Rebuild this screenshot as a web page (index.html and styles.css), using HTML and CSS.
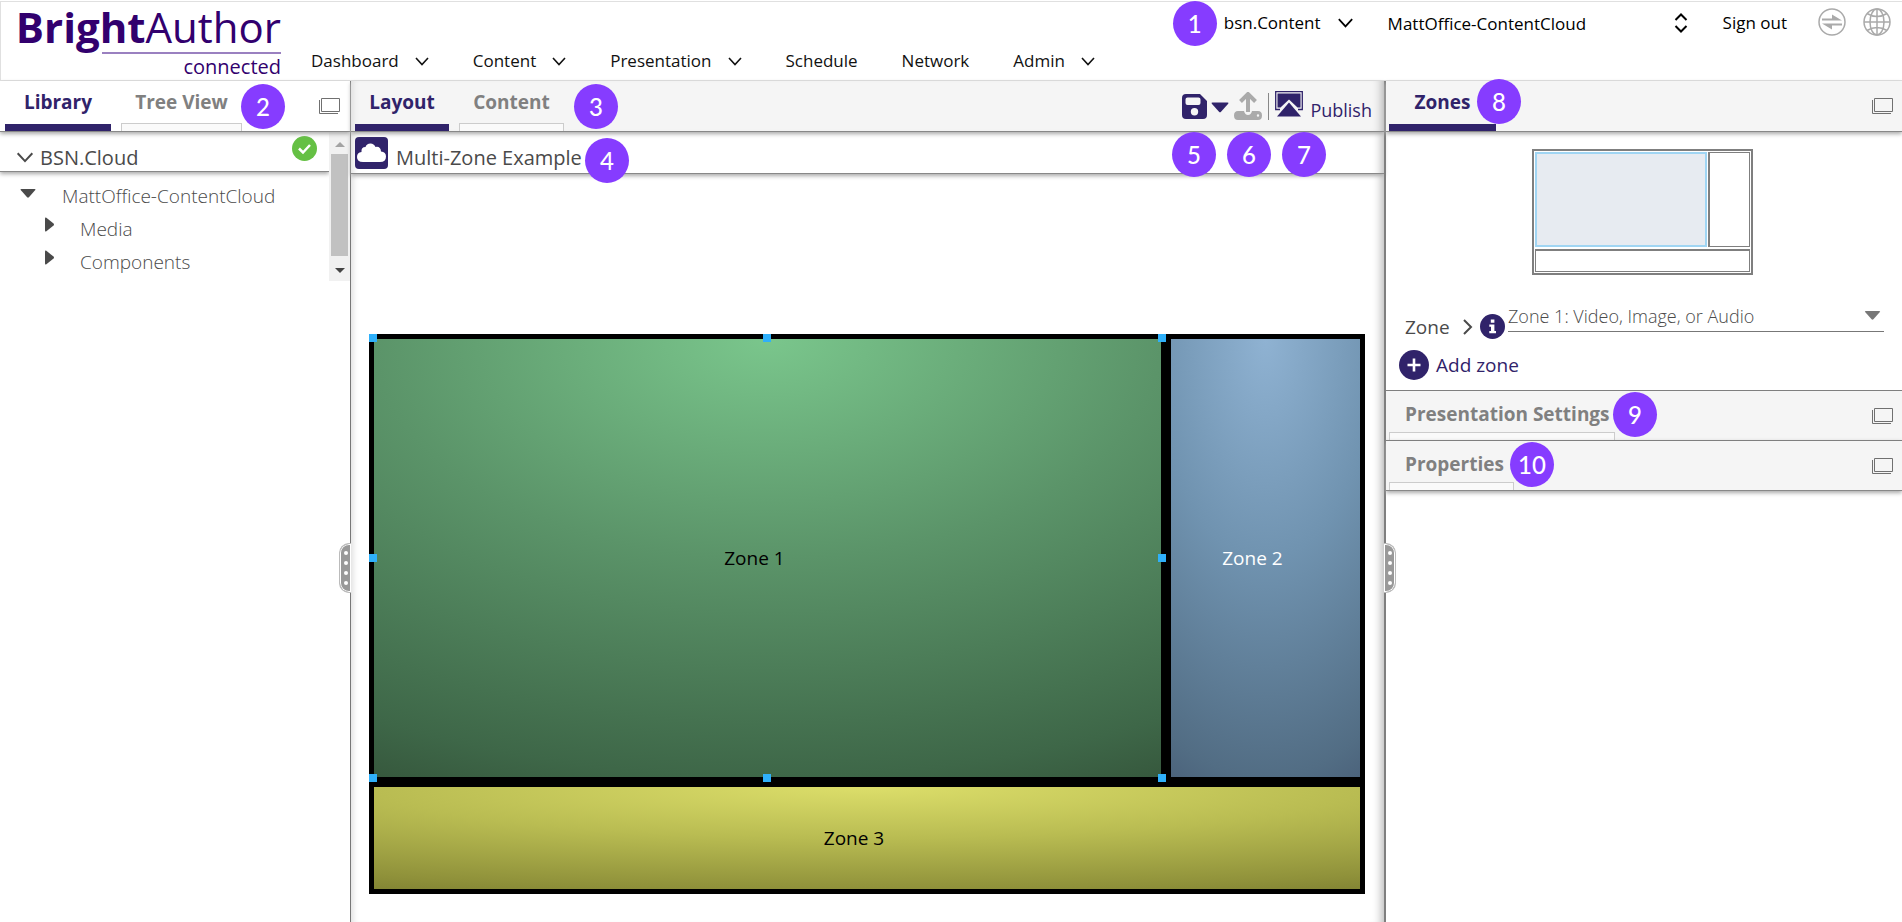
FILE: index.html
```html
<!DOCTYPE html>
<html lang="en">
<head>
<meta charset="utf-8">
<title>BrightAuthor:connected</title>
<link rel="stylesheet" href="styles.css">
</head>
<body>
<svg class="sprite" aria-hidden="true">
  <symbol id="chevron" viewBox="0 0 14 9"><path d="M1 1l6 6.500 6-6.500" fill="none" stroke="currentColor" stroke-width="1.600"/></symbol>
  <symbol id="windows" viewBox="0 0 23 18"><path d="M3.500 1.500h18v13h-18zM1.500 3v13.500H20" fill="none" stroke="currentColor"/></symbol>
  <symbol id="caret" viewBox="0 0 18 10"><path d="M1.500 0h15q1.500 0 .700 1.200L10 9.300q-1 1-2 0L.800 1.200Q0 0 1.500 0z" fill="currentColor"/></symbol>
</svg>

<header class="header">
  <a class="logo" href="#"><span class="logo-name"><b>Bright</b>Author</span><span class="logo-sub">connected</span></a>
  <nav class="nav">
    <button class="nav-item">Dashboard <svg class="chev"><use href="#chevron"/></svg></button>
    <button class="nav-item">Content <svg class="chev"><use href="#chevron"/></svg></button>
    <button class="nav-item">Presentation <svg class="chev"><use href="#chevron"/></svg></button>
    <a class="nav-item" href="#">Schedule</a>
    <a class="nav-item" href="#">Network</a>
    <button class="nav-item">Admin <svg class="chev"><use href="#chevron"/></svg></button>
  </nav>
  <div class="account">
    <span class="pin">1</span>
    <button class="nav-item service">bsn.Content <svg class="chev chev-lg"><use href="#chevron"/></svg></button>
    <div class="network-picker">
      <select class="network" aria-label="Network"><option>MattOffice-ContentCloud</option></select>
      <svg class="sorter" viewBox="0 0 14 20"><path d="M1.500 7L7 1.500 12.500 7M1.500 13L7 18.500 12.500 13" fill="none" stroke="currentColor" stroke-width="2"/></svg>
    </div>
    <a class="nav-item signout" href="#">Sign out</a>
    <button class="round" aria-label="Transfers"><svg viewBox="0 0 28 28"><circle cx="14" cy="14" r="13" fill="none" stroke="currentColor" stroke-width="1.500"/><path d="M4 12.500h20L14 6.500v4H4zM24 15.500H4l10 6v-4h10z" fill="currentColor"/></svg></button>
    <button class="round" aria-label="Language"><svg viewBox="0 0 28 28"><g fill="none" stroke="currentColor" stroke-width="1.500"><circle cx="14" cy="14" r="13"/><ellipse cx="14" cy="14" rx="7" ry="13"/><path d="M14 1v26M1 14h26M4 5.500q10 6 20 0M4 22.500q10-6 20 0"/></g></svg></button>
  </div>
</header>

<main class="workspace">
  <aside class="library">
    <div class="tabs tabs-plain">
      <button class="tab active">Library</button>
      <button class="tab tree-tab">Tree View</button>
      <button class="detach" aria-label="Detach panel"><svg><use href="#windows"/></svg></button>
      <span class="pin pin-2">2</span>
    </div>
    <div class="library-body">
      <div class="library-content">
        <div class="source">
          <svg class="source-chev"><use href="#chevron"/></svg><span class="source-name">BSN.Cloud</span>
          <svg class="check" viewBox="0 0 25 25"><circle cx="12.500" cy="12.500" r="12.500" fill="#65c044"/><path d="M7 12.500l4 4 7-7.500" fill="none" stroke="#fff" stroke-width="2.500"/></svg>
        </div>
        <ul class="tree">
          <li class="node"><svg class="open"><use href="#caret"/></svg>MattOffice-ContentCloud</li>
          <li class="node child"><svg class="closed" viewBox="0 0 10 16"><path d="M0 1.500Q0-.500 1.500.500L9.500 7q1 1 0 2L1.500 15.500Q0 16.500 0 14.500z" fill="currentColor"/></svg>Media</li>
          <li class="node child"><svg class="closed" viewBox="0 0 10 16"><path d="M0 1.500Q0-.500 1.500.500L9.500 7q1 1 0 2L1.500 15.500Q0 16.500 0 14.500z" fill="currentColor"/></svg>Components</li>
        </ul>
      </div>
      <div class="scrollbar"><i class="arrow up"></i><i class="thumb"></i><i class="arrow down"></i></div>
    </div>
    <span class="grip grip-left"><i></i><i></i><i></i><i></i></span>
  </aside>

  <section class="editor">
    <div class="tabs">
      <button class="tab active layout-tab">Layout</button>
      <button class="tab content-tab">Content</button>
      <div class="tools">
        <button class="tool" aria-label="Save"><svg class="save" viewBox="0 0 25 25"><path fill-rule="evenodd" d="M4 0h14l7 7v14q0 4-4 4H4q-4 0-4-4V4q0-4 4-4zM5.500 3.500Q3.500 3.500 3.500 5.500V9q0 2 2 2h11q2 0 2-2V5.500q0-2-2-2zM12.500 14a3.700 3.700 0 100 7.400 3.700 3.700 0 000-7.400z" fill="currentColor"/></svg></button>
        <button class="tool" aria-label="Save options"><svg class="save-caret"><use href="#caret"/></svg></button>
        <button class="tool" aria-label="Upload" disabled><svg class="upload" viewBox="0 0 28 28"><path d="M14 20V3M6.500 9.500L14 2l7.500 7.500" fill="none" stroke="currentColor" stroke-width="4"/><path fill-rule="evenodd" d="M4 19h6q1 4 4 4t4-4h6q4 0 4 4.500t-4 4.500H4q-4 0-4-4.500T4 19zm20 3.300a1.200 1.200 0 100 2.400 1.200 1.200 0 000-2.400z" fill="currentColor"/></svg></button>
        <span class="rule"></span>
        <button class="tool publish"><svg class="publish-icon" viewBox="0 0 28 26"><path d="M5 18.500H.700V.700h26.600v17.800H23" fill="none" stroke="currentColor" stroke-width="1.300"/><path d="M2.500 2.500h23v14h-3L14 8.500l-8.500 8h-3z" fill="currentColor"/><path d="M14 11.500L26 25.500H2z" fill="currentColor"/></svg>Publish</button>
      </div>
      <span class="pin pin-3">3</span>
      <span class="pin pin-5">5</span>
      <span class="pin pin-6">6</span>
      <span class="pin pin-7">7</span>
    </div>
    <div class="title-bar">
      <svg class="cloud" viewBox="0 0 33 32"><rect width="33" height="32" rx="4" fill="#30236a"/><path d="M8 25q-6 0-6-5 0-4.500 4.500-5Q6 10 10.500 10q1-3.500 5-3.500 3.500 0 5 3.500 5-1 5.500 4.500 5 .500 5 5 0 5.500-6 5.500z" fill="#fff"/></svg>
      <h1 class="title">Multi-Zone Example</h1>
      <span class="pin pin-4">4</span>
    </div>
    <div class="stage">
      <div class="screen">
        <div class="zone zone-1">Zone 1
          <i class="handle h-tl"></i><i class="handle h-t"></i><i class="handle h-tr"></i><i class="handle h-l"></i><i class="handle h-r"></i><i class="handle h-bl"></i><i class="handle h-b"></i><i class="handle h-br"></i>
        </div>
        <div class="zone zone-2">Zone 2</div>
        <div class="zone zone-3">Zone 3</div>
      </div>
    </div>
  </section>

  <aside class="inspector">
    <div class="tabs">
      <button class="tab active zones-tab">Zones</button>
      <button class="detach" aria-label="Detach panel"><svg><use href="#windows"/></svg></button>
      <span class="pin pin-8">8</span>
    </div>
    <div class="zones-body">
      <div class="mini"><i class="mini-1"></i><i class="mini-2"></i><i class="mini-3"></i></div>
      <div class="zone-row">
        <label class="zone-label" for="zone">Zone</label>
        <svg class="more" viewBox="0 0 10 16"><path d="M1 1l7 7-7 7" fill="none" stroke="currentColor" stroke-width="2"/></svg>
        <svg class="info" viewBox="0 0 25 25"><circle cx="12.500" cy="12.500" r="12.500" fill="#30236a"/><path d="M10.800 5.500h3.600v3.200h-3.600zM9.300 10.500h5.100v6.500H16v2.200H9.300V17h1.700v-4.300H9.300z" fill="#fff"/></svg>
        <div class="zone-picker">
          <select class="zone-select" id="zone"><option>Zone 1: Video, Image, or Audio</option></select>
          <svg class="zone-caret"><use href="#caret"/></svg>
        </div>
      </div>
      <button class="add"><svg class="plus" viewBox="0 0 30 30"><circle cx="15" cy="15" r="15" fill="#30236a"/><path d="M15 8.500v13M8.500 15h13" stroke="#fff" stroke-width="2.600"/></svg>Add zone</button>
    </div>
    <div class="fold">
      <button class="fold-title settings">Presentation Settings</button>
      <button class="detach" aria-label="Detach panel"><svg><use href="#windows"/></svg></button>
      <span class="pin pin-9">9</span>
    </div>
    <div class="fold last">
      <button class="fold-title props">Properties</button>
      <button class="detach" aria-label="Detach panel"><svg><use href="#windows"/></svg></button>
      <span class="pin pin-10">10</span>
    </div>
    <span class="grip grip-right"><i></i><i></i><i></i><i></i></span>
  </aside>
</main>
</body>
</html>
```

FILE: styles.css
```css
* { box-sizing: border-box; }

body {
  margin: 0;
  min-height: 100vh;
  display: flex;
  flex-direction: column;
  background: #fff;
  color: #4a4a4a;
  font-family: "Open Sans", "Noto Sans", sans-serif;
  font-size: 18px;
  overflow-x: hidden;
}

button, select {
  font: inherit;
  color: inherit;
  background: none;
  border: 0;
  padding: 0;
  margin: 0;
  cursor: pointer;
}
select { appearance: none; }
a { color: inherit; text-decoration: none; }
svg { display: block; flex: none; }
.sprite { position: absolute; width: 0; height: 0; }

/* Header */
.header {
  display: flex;
  height: 80px;
  margin-top: 1px;
  border: 1px solid #e0e0e0;
  border-right: 0;
  padding-left: 15px;
  color: #111;
  font-size: 17px;
  position: relative;
}
.logo {
  display: flex;
  flex-direction: column;
  align-items: flex-end;
  width: 265px;
  color: #32006e;
}
.logo-name {
  font-size: 42px;
  line-height: 50px;
  white-space: nowrap;
}
.logo-sub {
  border-top: 2px solid #9a80c0;
  width: 179px;
  text-align: right;
  font-size: 20px;
  line-height: 26px;
}
.nav {
  display: flex;
  align-items: flex-end;
  gap: 44px;
  padding: 0 0 7px 30px;
}
.nav-item {
  display: flex;
  align-items: center;
  gap: 16px;
  line-height: 24px;
  white-space: nowrap;
}
.chev { width: 14px; height: 9px; }
.chev-lg { width: 17px; height: 10px; }
.account {
  display: flex;
  align-items: flex-start;
  padding: 9px 11px 0 0;
  color: #000;
  position: absolute;
  right: 0;
  top: 0;
}
.account .pin { left: -51px; top: -1px; }
.service { margin-right: 34px; }
.network-picker {
  display: flex;
  align-items: center;
  width: 300px;
  margin-right: 35px;
}
.network { flex: 1; height: 24px; color: #000; }
.sorter { width: 14px; height: 20px; }
.signout { margin-right: 31px; }
.round { width: 28px; height: 28px; color: #aaa; margin-top: -3px; }
.round + .round { margin-left: 17px; }

/* Numbered callouts */
.pin {
  position: absolute;
  z-index: 5;
  width: 44px;
  height: 45px;
  border-radius: 50%;
  background: #863cff;
  color: #fff;
  font: 500 24px/45px Lato, sans-serif;
  text-align: center;
}
.pin-2 { left: 241px; top: 3px; }
.pin-3 { left: 223px; top: 3px; }
.pin-4 { left: 234px; top: 6px; }
.pin-5 { right: 168px; top: 51px; }
.pin-6 { right: 113px; top: 51px; }
.pin-7 { right: 58px; top: 51px; }
.pin-8 { left: 91px; top: -2px; }
.pin-9 { left: 227px; top: 1px; }
.pin-10 { left: 124px; top: 1px; }

/* Workspace */
.workspace {
  flex: 1;
  display: grid;
  grid-template-columns: 351px minmax(0, 1fr) 518px;
}
.library, .editor, .inspector { position: relative; }
.library { border-right: 1px solid #777; }
.editor { box-shadow: inset 8px 0 6px -6px #ddd, inset -10px 0 8px -7px #bbb; }
.inspector { border-left: 2px solid #7f7f7f; }

.tabs {
  display: flex;
  align-items: stretch;
  height: 51px;
  background: #f5f5f5;
  border-bottom: 1px solid #888;
  box-shadow: 0 2px 4px #aaa;
  position: relative;
  z-index: 2;
}
.editor .tabs { box-shadow: 0 2px 4px #aaa, inset 8px 0 6px -6px #ddd, inset -10px 0 8px -7px #bbb; }
.tabs-plain { background: #fff; padding-left: 5px; }
.tab {
  width: 106px;
  padding-bottom: 8px;
  display: flex;
  align-items: center;
  justify-content: center;
  font-size: 19px;
  line-height: 26px;
  font-weight: 700;
  color: #808080;
  position: relative;
}
.tab.active { color: #30236a; border-bottom: 7px solid #30236a; padding-bottom: 1px; }
.tab::after, .fold-title::after {
  content: "";
  position: absolute;
  left: 0;
  right: 0;
  bottom: 0;
  height: 7px;
  border: 1px solid #ccc;
  border-bottom: 0;
  background: #fafafa;
}
.tab.active::after { display: none; }
.tree-tab { width: 121px; margin-left: 10px; }
.layout-tab { width: 94px; margin-left: 4px; }
.content-tab { width: 105px; margin-left: 10px; }
.zones-tab { width: 107px; margin-left: 3px; }
.detach { margin: 0 9px 0 auto; color: #707070; }
.detach svg { width: 23px; height: 18px; }
.inspector .detach { margin-right: 8px; }

/* Library */
.library-body { display: flex; }
.library-content { flex: 1; }
.source {
  display: flex;
  align-items: center;
  gap: 6px;
  height: 40px;
  padding: 12px 12px 0 16px;
  border-bottom: 1px solid #888;
  box-shadow: 0 2px 4px #aaa;
  font-size: 20px;
  line-height: 26px;
  font-weight: 500;
}
.source-chev { width: 18px; height: 11px; }
.check { width: 25px; height: 25px; margin: -19px 0 0 auto; }
.tree { list-style: none; margin: 0; padding: 7px 0 0; font-size: 19px; font-weight: 300; }
.node { display: flex; align-items: center; height: 33px; padding-left: 20px; gap: 26px; white-space: nowrap; }
.child { padding-left: 45px; }
.open { width: 16px; height: 9px; margin-top: -4px; }
.closed { width: 9px; height: 15px; margin-top: -8px; }
.scrollbar {
  display: flex;
  flex-direction: column;
  align-items: center;
  width: 21px;
  height: 149px;
  padding: 10px 0 8px;
  background: #f1f1f1;
}
.thumb { flex: 1; width: 17px; margin: 7px 0 12px; background: #c1c1c1; }
.arrow { border: 5px solid transparent; }
.up { border-top: 0; border-bottom-color: #a3a3a3; }
.down { border-bottom: 0; border-top-color: #444; }

.grip {
  position: absolute;
  top: 462px;
  width: 12px;
  height: 50px;
  display: flex;
  flex-direction: column;
  align-items: center;
  justify-content: center;
  gap: 6px;
  background: #999;
  border: 1px solid #bbb;
  box-shadow: inset 0 0 0 1px #fff;
}
.grip i { width: 4px; height: 4px; border-radius: 50%; background: #fff; }
.grip-left { right: -1px; border-right: 0; border-radius: 10px 0 0 10px; }
.grip-right { left: -2px; border-left: 0; border-radius: 0 10px 10px 0; }

/* Editor */
.tools { display: flex; align-items: center; margin-left: auto; padding-right: 12px; color: #30236a; }
.save { width: 25px; height: 25px; }
.save-caret { width: 18px; height: 11px; margin: 2px 5px 0 4px; }
.upload { width: 28px; height: 28px; color: #aaa; }
.rule { width: 1px; height: 27px; margin: 0 6px; background: #888; }
.publish { display: flex; align-items: center; gap: 7px; padding-top: 8px; line-height: 24px; }
.publish-icon { width: 28px; height: 26px; margin-top: -13px; }
.title-bar {
  display: flex;
  align-items: flex-end;
  gap: 8px;
  height: 42px;
  padding: 0 4px 2px;
  border-bottom: 1px solid #888;
  box-shadow: 0 2px 4px #aaa;
  position: relative;
}
.cloud { width: 33px; height: 32px; margin-bottom: 2px; }
.title { margin: 0; font-size: 20px; line-height: 26px; font-weight: 500; }
.stage { padding: 160px 19px 28px 18px; }
.screen {
  display: grid;
  grid-template: 4fr 1fr / 4fr 1fr;
  aspect-ratio: 16 / 9;
  background: #000;
}
.zone {
  display: flex;
  align-items: center;
  justify-content: center;
  padding-right: 26px;
  border: 5px solid #000;
  color: #000;
  font-size: 19px;
  position: relative;
}
.zone-1 { background-image: radial-gradient(100% 100% at 50% 0, #7ac68c, #5b9469 50%, #3e6748 100%, #36583d 112%); }
.zone-2 { color: #fff; background-image: radial-gradient(120% 100% at 50% 0, #8fb2d2, #7093b0 50%, #526d84 100%, #495f78 112%); }
.zone-3 { grid-column: span 2; background-image: radial-gradient(100% 100% at 50% 0, #dcde6a, #b9bc52 50%, #8f913a 100%, #838534 112%); }
.handle { position: absolute; width: 8px; height: 8px; background: #2fb0fa; }
.h-tl, .h-t, .h-tr { top: -5px; }
.h-bl, .h-b, .h-br { bottom: -5px; }
.h-l, .h-r { top: calc(50% - 4px); }
.h-tl, .h-l, .h-bl { left: -5px; }
.h-tr, .h-r, .h-br { right: -5px; }
.h-t, .h-b { left: calc(50% - 4px); }

/* Inspector */
.zones-body { padding: 17px 4px 10px 0; }
.mini {
  display: grid;
  grid-template: 95px 23px / 172px 42px;
  gap: 2px 1px;
  width: 221px;
  height: 126px;
  margin: 0 auto;
  padding: 1px;
  border: 2px solid #7f7f7f;
}
.mini-1 { background: #e7ebf1; border: 2px solid #a0d5f3; }
.mini-2, .mini-3 { border: 1px solid #7f7f7f; }
.mini-2 { border-left-width: 2px; }
.mini-3 { grid-column: span 2; border-top-width: 2px; }
.zone-row {
  display: flex;
  align-items: center;
  margin-top: 21px;
  padding: 0 14px 0 19px;
}
.zone-label { width: 58px; padding-top: 18px; font-size: 19px; line-height: 26px; font-weight: 500; }
.more { width: 10px; height: 16px; margin-top: 18px; }
.info { width: 25px; height: 25px; margin: 16px 3px 0 7px; }
.zone-picker {
  flex: 1;
  display: flex;
  align-items: center;
  border-bottom: 1px solid #777;
  padding-right: 3px;
  margin-bottom: 4px;
}
.zone-select { flex: 1; height: 30px; font-weight: 300; }
.zone-caret { width: 17px; height: 9px; color: #777; }
.add {
  display: flex;
  align-items: center;
  gap: 7px;
  margin: 10px 0 0 13px;
  font-size: 19px;
  line-height: 26px;
  font-weight: 500;
  color: #30236a;
}
.plus { width: 30px; height: 30px; }
.fold {
  display: flex;
  height: 50px;
  border-top: 1px solid #7f7f7f;
  background: #f5f5f5;
  position: relative;
  padding-left: 3px;
}
.fold.last { height: 51px; border-bottom: 1px solid #888; box-shadow: 0 2px 4px #aaa; }
.fold-title {
  width: 226px;
  padding: 0 0 4px 16px;
  font-size: 19px;
  font-weight: 700;
  color: #808080;
  text-align: left;
  white-space: nowrap;
  position: relative;
}
.props { width: 125px; }
```
